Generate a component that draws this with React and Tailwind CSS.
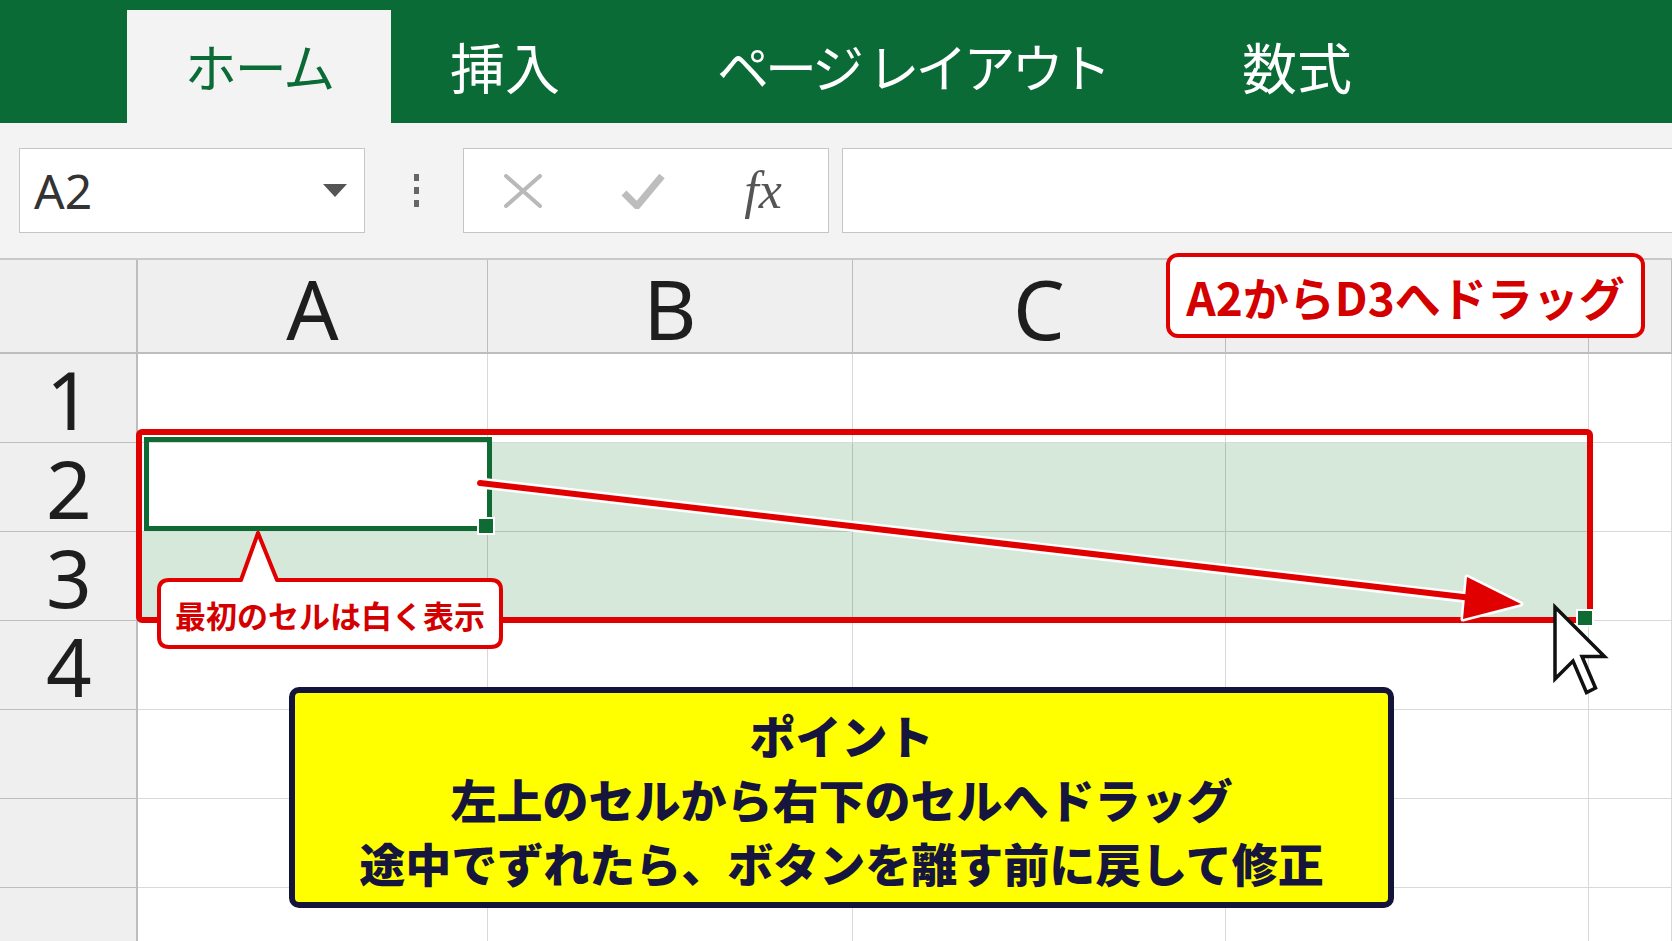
import React from 'react';

const JP = "font-['Noto_Sans_CJK_JP','Noto_Sans',sans-serif]";
const LATIN = "font-['Noto_Sans','Noto_Sans_CJK_JP',sans-serif]";

const COLUMNS = ['A', 'B', 'C', '', ''];
const ROWS = [1, 2, 3, 4, 5, 6, 7];

// cells A2:D3 are selected; A2 is the active cell and stays white
const isSelected = (row, col) => (row === 2 || row === 3) && col >= 0 && col <= 3;
const isActive = (row, col) => row === 2 && col === 0;

const Ribbon = () => (
  <div className={`flex h-[123px] bg-[#0a6b37] ${JP} leading-none`}>
    <div className="ml-[127px] mt-[10px] flex h-[113px] w-[264px] items-center justify-center pb-[2px] text-[52px] tracking-[-2px] text-[#0b6b36] bg-[#f3f3f3]">
      ホーム
    </div>
    <div className="flex w-[326px] items-center pl-[59px] pt-[8px] text-[55px] text-white">挿入</div>
    <div className="flex w-[525px] items-center pt-[8px] text-[52px] tracking-[-4px] text-white">ページ レイアウト</div>
    <div className="flex items-center pt-[8px] text-[55px] text-white">数式</div>
  </div>
);

const FormulaBar = () => (
  <div className="flex h-[135px] items-start bg-[#f3f3f3] pt-[25px]">
    <div className="ml-[19px] flex h-[85px] w-[346px] items-center justify-between border border-[#c6c6c6] bg-white pl-[14px] pr-[17px]">
      <span className={`${LATIN} text-[48px] leading-none text-[#333]`}>A2</span>
      <svg width="24" height="13" viewBox="0 0 24 13">
        <path d="M0 0 L24 0 L12 13 Z" fill="#555" />
      </svg>
    </div>
    <div className="flex h-[85px] w-[98px] flex-col items-center justify-center gap-[6px] pl-[4px]">
      <span className="h-[7px] w-[5px] bg-[#666]" />
      <span className="h-[7px] w-[5px] bg-[#666]" />
      <span className="h-[7px] w-[5px] bg-[#666]" />
    </div>
    <div className="flex h-[85px] w-[366px] items-center border border-[#c6c6c6] bg-white">
      <div className="flex w-[118px] justify-center">
        <svg width="40" height="34" viewBox="0 0 40 34">
          <path d="M3 2 L37 32 M37 2 L3 32" stroke="#b9b9b9" strokeWidth="4" strokeLinecap="round" />
        </svg>
      </div>
      <div className="flex w-[122px] justify-center">
        <svg width="44" height="36" viewBox="0 0 44 36">
          <path d="M3 20 L16 33 L41 3" stroke="#bdbdbd" strokeWidth="7" fill="none" strokeLinejoin="round" />
        </svg>
      </div>
      <div className="flex w-[118px] justify-center">
        <span className="font-['Liberation_Serif',serif] text-[52px] italic leading-none text-[#555]">fx</span>
      </div>
    </div>
    <div className="ml-[13px] h-[85px] flex-1 border-y border-l border-[#c6c6c6] bg-white" />
  </div>
);

const Sheet = () => (
  <div className="grid grid-cols-[138px_350px_365px_373px_363px_1fr] grid-rows-[94px_repeat(7,89px)] border-t-2 border-[#c8c8c8]">
    <div className="border-b-2 border-r-2 border-[#bdbdbd] bg-[#efefef]" />
    {COLUMNS.map((c, i) => (
      <div
        key={`h${i}`}
        className={`flex items-center justify-center border-b-2 border-r border-[#bdbdbd] bg-[#efefef] pt-[4px] ${LATIN} text-[82px] leading-none text-[#1e1e1e]`}
      >
        {c}
      </div>
    ))}
    {ROWS.map((r) => (
      <React.Fragment key={r}>
        <div
          className={`flex items-center justify-center border-b border-r-2 border-[#bdbdbd] bg-[#efefef] pl-[2px] pt-[2px] ${LATIN} text-[80px] leading-none text-[#1e1e1e]`}
        >
          {r <= 4 ? r : ''}
        </div>
        {COLUMNS.map((_, c) => {
          const sel = isSelected(r, c) && !isActive(r, c);
          return (
            <div
              key={c}
              className={
                sel
                  ? 'border-b border-r border-[#b3c2b6] bg-[#d6e8d9]'
                  : 'border-b border-r border-[#d9d9d9] bg-white'
              }
            />
          );
        })}
      </React.Fragment>
    ))}
  </div>
);

// arrow, speech bubble and mouse pointer drawn over the sheet
const Annotations = () => (
  <svg className="pointer-events-none absolute left-0 top-0" width="1672" height="941" viewBox="0 0 1672 941">
    <path d="M480 483 L1470 598" stroke="#fff" strokeWidth="11" strokeLinecap="round" />
    <path d="M1467 577 L1521 604 L1463 619 Z" fill="#fff" stroke="#fff" strokeWidth="5" strokeLinejoin="round" />
    <path d="M480 483 L1472 598" stroke="#e00000" strokeWidth="6" strokeLinecap="round" />
    <path d="M1467 577 L1521 604 L1463 619 Z" fill="#e00000" />

    <path
      d="M169 580 L241 580 L258 533 L277 580 L491 580 Q501 580 501 590 L501 637 Q501 647 491 647 L169 647 Q159 647 159 637 L159 590 Q159 580 169 580 Z"
      fill="#fff"
      stroke="#e00000"
      strokeWidth="4"
      strokeLinejoin="round"
    />

    <path
      d="M1555 607 L1555 679 L1573 661 L1586.5 692.5 L1595.5 688 L1582 656.5 L1604.5 656.5 Z"
      fill="#fff"
      stroke="#111"
      strokeWidth="3.5"
      strokeLinejoin="miter"
    />
  </svg>
);

export default function App() {
  return (
    <div className="relative h-[941px] w-[1672px] overflow-hidden bg-white">
      <Ribbon />
      <FormulaBar />
      <Sheet />

      {/* active cell A2 with its fill handle */}
      <div className="absolute left-[144px] top-[437px] h-[94px] w-[348px] border-[5px] border-[#0f6b34]" />
      <div className="absolute left-[477px] top-[517px] h-[18px] w-[18px] border-2 border-white bg-[#0f6b34]" />

      {/* red outline round the selected range */}
      <div className="absolute left-[136px] top-[429px] h-[194px] w-[1457px] rounded-[6px] border-[6px] border-[#e00000]" />

      {/* fill handle at D3 */}
      <div className="absolute left-[1576px] top-[609px] h-[18px] w-[18px] border-2 border-white bg-[#0f6b34]" />

      <Annotations />

      <div className={`absolute left-[159px] top-[583px] flex h-[62px] w-[342px] items-center justify-center ${JP} text-[31px] font-bold leading-none text-[#d40000]`}>
        最初のセルは白く表示
      </div>

      <div className={`absolute left-[1166px] top-[253px] flex h-[85px] w-[479px] items-center justify-center rounded-[12px] border-4 border-[#e00000] bg-white ${JP} text-[46px] font-bold leading-none text-[#d40000]`}>
        A2からD3へドラッグ
      </div>

      <div className={`absolute left-[289px] top-[687px] flex h-[221px] w-[1105px] flex-col items-center justify-center rounded-[10px] border-[6px] border-[#14143a] bg-[#ffff00] ${JP} text-[46px] font-black leading-[64px] text-[#15153d]`}>
        <div>ポイント</div>
        <div>左上のセルから右下のセルへドラッグ</div>
        <div>途中でずれたら、ボタンを離す前に戻して修正</div>
      </div>
    </div>
  );
}
